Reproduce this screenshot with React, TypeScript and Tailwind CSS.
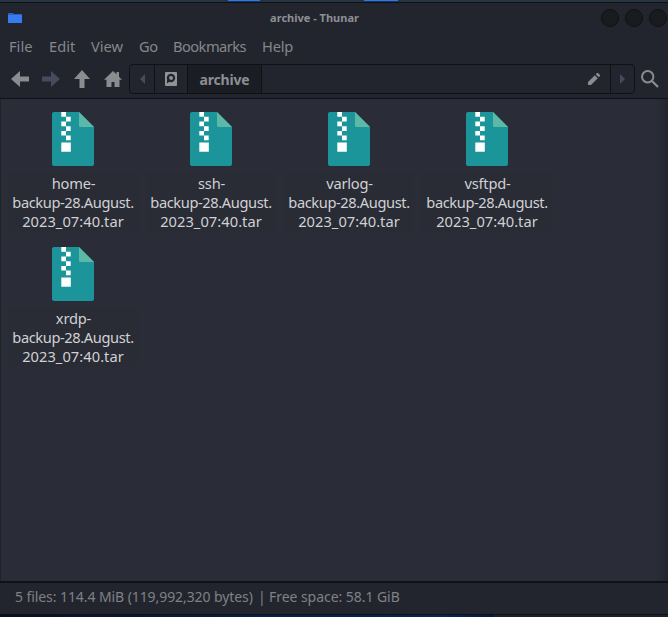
import React from "react";

const files = ["home-", "ssh-", "varlog-", "vsftpd-", "xrdp-"];

const menus = [
  { label: "File", width: "w-[40px]" },
  { label: "Edit", width: "w-[42px]" },
  { label: "View", width: "w-[48px]" },
  { label: "Go", width: "w-[34px] tracking-[-0.5px]" },
  { label: "Bookmarks", width: "w-[89px] tracking-[-0.55px]" },
  { label: "Help", width: "w-[40px] tracking-[-0.2px]" },
];

function ArchiveIcon() {
  return (
    <svg width="42" height="54" viewBox="0 0 42 54" className="block">
      <path d="M2 0H27L42 15V52Q42 54 40 54H2Q0 54 0 52V2Q0 0 2 0Z" fill="#1c959a" />
      <path d="M27 0L42 15H28.5Q27 15 27 13.5Z" fill="#5cb9a7" />
      <path
        d="M9.3 0H14V4.8H9.3ZM14 4.8H18.7V9.5H14ZM9.3 9.5H14V14.2H9.3ZM14 14.2H18.7V18.9H14ZM9.3 18.9H14V23.5H9.3ZM14 23.5H18.7V28.2H14ZM9.3 30.5H18.8V39.8H9.3Z"
        fill="#fff"
      />
    </svg>
  );
}

function FileItem({ name }: { name: string }) {
  return (
    <div className="flex h-[135px] w-[138px] flex-col items-center pr-[8px]">
      <ArchiveIcon />
      <div className="mt-[6px] h-[60px] w-[130px] shrink-0 bg-[#292b35] pt-[2px] text-center leading-[19px] text-[#d0d1d4]">
        <div className="pl-[1px] tracking-[-0.2px]">{name}</div>
        <div className="tracking-[-0.41px]">backup-28.August.</div>
        <div className="tracking-[0.05px]">2023_07:40.tar</div>
      </div>
    </div>
  );
}

function WindowButton() {
  return <span className="size-[18px] shrink-0 rounded-full border border-[#0f1116] bg-[#191b1f]" />;
}

export default function App() {
  return (
    <div className="flex h-[617px] w-[668px] flex-col overflow-hidden bg-[#23252e] font-['Noto_Sans',sans-serif] text-[14.67px] text-[#85878c]">
      <div className="flex h-[2px] shrink-0 bg-[#263442]">
        <span className="ml-[228px] h-[1px] w-[32px] bg-[#2777ff]" />
        <span className="ml-[104px] h-[1px] w-[34px] bg-[#2777ff]" />
      </div>
      <div className="h-px shrink-0 bg-[#0f1116]" />

      <header className="grid h-[30px] shrink-0 grid-cols-[70px_1fr_70px] items-center">
        <svg width="14" height="11" viewBox="0 0 14 11" className="ml-[8px]">
          <path d="M0 1Q0 0 1 0H5L6 1H13Q14 1 14 2V10H0Z" fill="#2a62c4" />
          <path d="M0 2H14V9.5Q14 10 13.5 10H.5Q0 10 0 9.5Z" fill="#367bf0" />
        </svg>
        <h1 className="pr-[39px] text-center text-[11px] leading-[18px] font-bold text-[#8d8f94]">
          archive - Thunar
        </h1>
        <div className="flex gap-[6px] pl-[3px]">
          <WindowButton />
          <WindowButton />
          <WindowButton />
        </div>
      </header>

      <nav className="flex h-[26px] shrink-0 items-center pl-[9px] leading-[20px]">
        {menus.map((m) => (
          <span key={m.label} className={`${m.width} whitespace-nowrap`}>
            {m.label}
          </span>
        ))}
      </nav>

      <div className="flex h-[39px] shrink-0 items-center border-t border-[#21232b] pl-[11px]">
        <svg width="18" height="16" viewBox="0 0 18 16" className="mr-[13px]" fill="#8b8c90">
          <path d="M0 8L9 0V5.5H18V10.5H9V16Z" />
        </svg>
        <svg width="18" height="16" viewBox="0 0 18 16" className="mr-[14px]" fill="#464a5c">
          <path d="M18 8L9 0V5.5H0V10.5H9V16Z" />
        </svg>
        <svg width="16" height="18" viewBox="0 0 16 18" className="mr-[14px]" fill="#8b8c90">
          <path d="M8 0L16 9H10.5V18H5.5V9H0Z" />
        </svg>
        <svg width="18" height="16" viewBox="0 0 18 16" className="mr-[7px]" fill="#8b8c90">
          <path d="M9 0L12.5 3.3V1H15V5.8L18 8.7H15.5V16H10.5V11H7.5V16H2.5V8.7H0Z" />
        </svg>
        <div className="flex h-[30px] w-[506px] overflow-hidden rounded-[4px] border border-[#0f1116]">
          <div className="flex w-[25px] items-center justify-center border-r border-[#0f1116]">
            <svg width="5" height="10" viewBox="0 0 5 10">
              <path d="M5 0V10L0 5Z" fill="#464a5c" />
            </svg>
          </div>
          <div className="flex w-[33px] items-center justify-center border-r border-[#0f1116]">
            <svg width="12" height="14" viewBox="0 0 12 14">
              <rect width="12" height="14" rx="1" fill="#929397" />
              <circle cx="6" cy="6" r="4.2" fill="#23252e" />
              <circle cx="6" cy="6" r="2" fill="#929397" />
              <path d="M2 8L5.2 6.6L4.4 9.8L2 11.5Z" fill="#23252e" />
            </svg>
          </div>
          <div className="flex w-[74px] items-center justify-center border-r border-[#0f1116] bg-[#1b1d24] text-[14px] font-bold tracking-[-0.2px] text-[#8d8f93]">
            archive
          </div>
          <div className="flex flex-1 items-center justify-end border-r border-[#0f1116] pr-[10px]">
            <svg width="12" height="12" viewBox="0 0 12 12" fill="#8b8c90">
              <path d="M0 9L6.8 2.2L9.8 5.2L3 12H0ZM7.7 1.3L9 0H10L12 2V3L10.7 4.3Z" />
            </svg>
          </div>
          <div className="flex w-[23px] items-center justify-center">
            <svg width="5" height="10" viewBox="0 0 5 10">
              <path d="M0 0V10L5 5Z" fill="#464a5c" />
            </svg>
          </div>
        </div>
        <svg width="18" height="18" viewBox="0 0 18 18" className="ml-[6px]" fill="none" stroke="#8b8c90">
          <circle cx="6.7" cy="6.7" r="5.7" strokeWidth="2" />
          <path d="M11 11L17 17" strokeWidth="2.3" />
        </svg>
      </div>

      <div className="h-px shrink-0 bg-[#0f1116]" />
      <main className="flex flex-1 flex-wrap content-start border-l border-[#20222a] bg-[#2a2c37] bg-[linear-gradient(to_right,transparent_655px,#23252e_667px)] pt-[13px] pl-[7px]">
        {files.map((name) => (
          <FileItem key={name} name={name} />
        ))}
      </main>
      <div className="h-[2px] shrink-0 bg-[#0f1116]" />
      <footer className="flex h-[31px] shrink-0 pl-[15px] text-[14px] leading-[28px] whitespace-nowrap text-[#7f8186]">
        <span className="w-[243px] tracking-[-0.08px]">5 files: 114.4 MiB (119,992,320 bytes)</span>
        <span className="w-[11px]">|</span>
        <span className="tracking-[-0.05px]">Free space: 58.1 GiB</span>
      </footer>
      <div className="h-px shrink-0 bg-[#0f1116]" />
      <div className="flex h-[2px] shrink-0 bg-[#202126]">
        <span className="w-[494px] bg-[linear-gradient(to_right,#051027,#071c43_40%,#05265a_90%,#061a3b)]" />
      </div>
    </div>
  );
}
